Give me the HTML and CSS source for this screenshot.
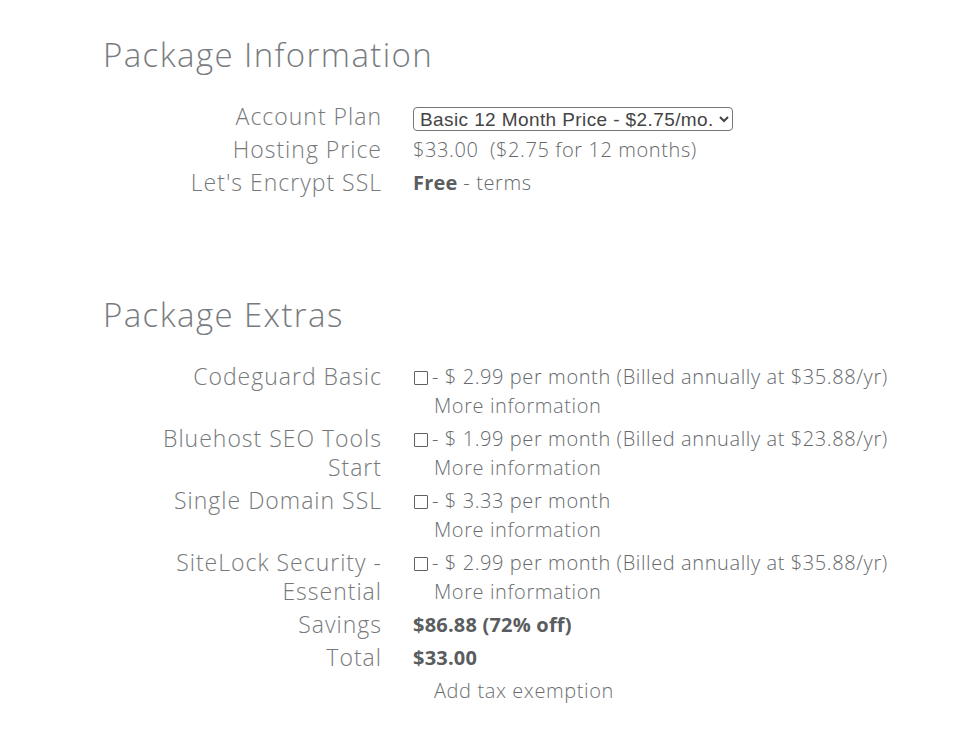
FILE: index.html
```html
<!DOCTYPE html>
<html lang="en">
<head>
<meta charset="utf-8">
<title>Package Information</title>
<link rel="stylesheet" href="styles.css">
</head>
<body>
<main class="page">
  <section class="section">
    <h2 class="heading">Package Information</h2>
    <div class="table">
      <div class="label">Account Plan</div>
      <div class="value">
        <select class="plan">
          <option>Basic 12 Month Price - $2.75/mo.</option>
        </select>
      </div>
      <div class="label">Hosting Price</div>
      <div class="value">$33.00&nbsp; ($2.75 for 12 months)</div>
      <div class="label">Let's Encrypt SSL</div>
      <div class="value"><b class="strong">Free</b> - terms</div>
    </div>
  </section>

  <section class="section section-extras">
    <h2 class="heading">Package Extras</h2>
    <div class="table">
      <div class="label">Codeguard Basic</div>
      <div class="value">
        <div><span class="check"></span>- $ 2.99 per month (Billed annually at $35.88/yr)</div>
        <div class="more">More information</div>
      </div>
      <div class="label">Bluehost SEO Tools<br>Start</div>
      <div class="value">
        <div><span class="check"></span>- $ 1.99 per month (Billed annually at $23.88/yr)</div>
        <div class="more">More information</div>
      </div>
      <div class="label">Single Domain SSL</div>
      <div class="value">
        <div><span class="check"></span>- $ 3.33 per month</div>
        <div class="more">More information</div>
      </div>
      <div class="label">SiteLock Security -<br>Essential</div>
      <div class="value">
        <div><span class="check"></span>- $ 2.99 per month (Billed annually at $35.88/yr)</div>
        <div class="more">More information</div>
      </div>
      <div class="label">Savings</div>
      <div class="value"><b class="strong">$86.88 (72% off)</b></div>
      <div class="label">Total</div>
      <div class="value"><b class="strong">$33.00</b></div>
      <div class="label"></div>
      <div class="value"><div class="more">Add tax exemption</div></div>
    </div>
  </section>
</main>
</body>
</html>
```

FILE: styles.css
```css
html, body {
  margin: 0;
  padding: 0;
  background: #ffffff;
}

body {
  font-family: "Open Sans", "Liberation Sans", sans-serif;
  color: #6f7274;
}

.page {
  padding: 36px 0 0 103px;
  width: 857px;
}

.section-extras {
  margin-top: 97px;
}

.heading {
  margin: 0 0 26px 0;
  font-size: 33px;
  line-height: 38px;
  font-weight: 300;
  color: #777b80;
  letter-spacing: 1.4px;
}

.table {
  display: grid;
  grid-template-columns: 279px auto;
  column-gap: 31px;
}

.label {
  text-align: right;
  font-size: 23px;
  line-height: 29px;
  font-weight: 300;
  letter-spacing: 1px;
  color: #76797b;
  padding: 2px 0;
}

.value {
  font-size: 20px;
  line-height: 29px;
  font-weight: 300;
  letter-spacing: 0.6px;
  color: #66696c;
  padding: 2px 0;
  white-space: nowrap;
}

.strong {
  font-weight: 700;
  letter-spacing: 0.2px;
  color: #5a5d60;
}

.more {
  margin-left: 21px;
  color: #6c6f72;
}

.check {
  display: inline-block;
  width: 12px;
  height: 12px;
  border: 1px solid #5f6265;
  border-radius: 1px;
  margin: 0 4px 0 1px;
  vertical-align: -1px;
}

.plan {
  font-family: "Liberation Sans", Arial, sans-serif;
  font-size: 19px;
  letter-spacing: 0.4px;
  color: #444;
  height: 24px;
  padding: 0 2px;
  border: 1px solid #767676;
  border-radius: 4px;
  background: #fff;
  vertical-align: middle;
}
```
